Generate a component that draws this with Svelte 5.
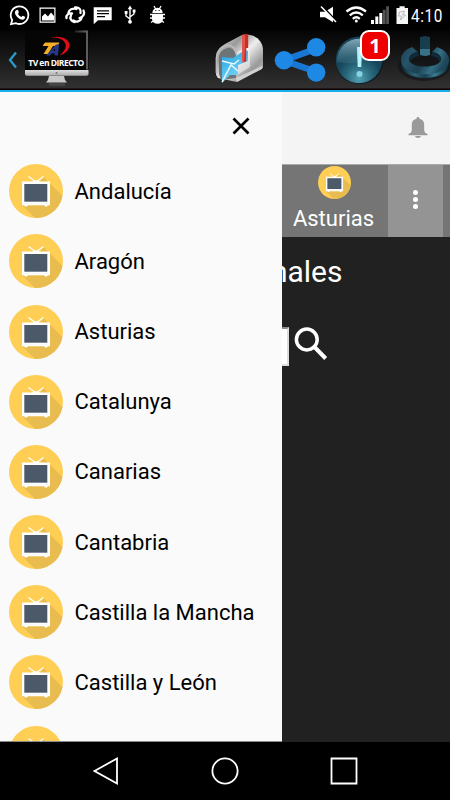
<script>
  const regions = ['Andalucía', 'Aragón', 'Asturias', 'Catalunya', 'Canarias', 'Cantabria', 'Castilla la Mancha', 'Castilla y León', ''];
</script>

{#snippet tv(size)}
  <svg class="tv" width={size} height={size} viewBox="0 0 54 54">
    <defs><clipPath id="disc"><circle cx="27" cy="27" r="27" /></clipPath></defs>
    <circle cx="27" cy="27" r="27" fill="#ffce54" />
    <path clip-path="url(#disc)" d="M34.500 13 L60 38.500 V60 H32 L13 41 L30 20Z" fill="#e9bc50" />
    <path d="M19.500 12.500 L26 17.200 M34.500 12.500 L28 17.200" fill="none" stroke="#fff" stroke-width="1.200" />
    <path d="M22.500 17.800q4.500-3 9 0Z M13 17.500h28v23.700H13z M15 41h4l-1 1.500h-2z M35 41h4l-1 1.500h-2z" fill="#fff" />
    <path d="M15.300 20h23v17.700h-23z" fill="#4c5968" />
    <path d="M14 39.300h25" stroke="#e6e9ed" stroke-width=".4" />
  </svg>
{/snippet}

<div class="screen">
  <div class="status">
    <svg width="170" height="30" viewBox="0 0 170 30" fill="#fff">
      <path d="M11 24.200l1.200-4.200A8.800 8.800 0 1 1 16 23.200Z" fill="none" stroke="#fff" stroke-width="1.800" />
      <path d="M16.300 10.200c1-1 1.700-.6 2.200 1l.3 1c.1.700-.8 1.200-.8 1.500.6 1.500 1.800 2.500 3.300 3.200.5.200 1-1.200 1.500-1.200l2.200 1.100c.5.400-.2 2.700-2.300 2.900-3.500.2-8.300-4.500-7.700-7.700 0-.8.700-1.400 1.300-1.800Z" />
      <path fill-rule="evenodd" d="M39.500 7.500h16v15.200h-16zM40.700 8.700v12.800h13.600V8.700z" />
      <path d="M42 20.500v-4l3-3 3 3 3-4 3 3.500v4.500Z" />
      <g fill="none" stroke="#fff" stroke-width="2.300" stroke-linecap="round">
        <path d="M68.500 12.500c.5-3 4-4.500 8-3.500M75 7.500c4-.5 6.500 2 5.500 5.500M83.500 10.500c1.500 3 0 6.500-4 7.500M81.500 18.500c-1.500 3-5 4-8 2M74.500 22c-3.500-.5-5-4-3.500-6.500M66.500 18c-.5-3 2-5 5.500-4.500" />
      </g>
      <path d="M93.700 7.200h18v13H98l-4.300 4z" />
      <path d="M97 10.800h12M97 13.700h12M97 16.600h8" stroke="#000" stroke-width="1.200" />
      <path d="M130 8v13M130 19l-4-3v-3M130 17l4-3v-3" fill="none" stroke="#fff" stroke-width="1.400" />
      <path d="M130 5.500l2.300 3.700h-4.600zM124.700 11h2.800v3h-2.800zM132.700 9.500h2.800v3h-2.800z" />
      <circle cx="130" cy="21.800" r="1.900" />
      <path d="M152.300 13a5.200 5.300 0 0 1 10.400 0zM152 14.200h11v4.800a5.500 4.800 0 0 1-11 0z" />
      <path d="M154 6l1.700 3M161 6l-1.700 3M150 14.500h15M150 18h15M151 22.500l3-2M164 22.500l-3-2" stroke="#fff" stroke-width="1.300" />
      <path d="M155.300 10.500h1M158.700 10.500h1" stroke="#000" />
    </svg>
    <svg width="92" height="30" viewBox="319 0 92 30" fill="#fff">
      <path d="M320 11.800h5l8-5v15.500l-8-5h-5z" /><path d="M322.500 6.500l15 16" stroke="#000" stroke-width="2" /><path d="M321 6.500l15 15.500" stroke="#fff" stroke-width="1.500" />
      <g fill="none" stroke="#fff" stroke-width="2.300"><path d="M346.500 11.500q9.800-8 19.500 0M349.800 15.300q6.500-5.500 13 0M352.800 18.800q3.500-3 7 0" /></g><circle cx="356.300" cy="21" r="1.500" />
      <path d="M371 20h3v4h-3zM375.300 16.500h3V24h-3zM379.300 13h3v11h-3z" /><path d="M382.800 9.700h2.800V24h-2.800zM386.200 6.300h2.700V24h-2.700z" fill="#555" />
      <path d="M396.500 8h3V6.300h5.200V8h3.300v16h-11.500z" fill="#f5f5f5" /><path d="M399.500 12l5-.8-2 3.800h3l-5 5 1-4h-3z" fill="none" stroke="#aaa" stroke-width=".8" />
    </svg>
    <span class="clock">4:10</span>
  </div>

  <div class="actionbar">
    <svg class="brand" width="95" height="59" viewBox="0 30 95 59">
      <defs>
        <linearGradient id="stand" y2="1" x2="0"><stop stop-color="#ddd" /><stop offset="1" stop-color="#aaa" /></linearGradient>
        <linearGradient id="edge" x1="0" x2="1"><stop stop-color="#222" /><stop offset="1" stop-color="#666" /></linearGradient>
      </defs>
      <path d="M16 52.500L10 60l6 7.500" fill="none" stroke="#2b9bc9" stroke-width="2.300" />
      <path d="M26 31h61q1.500 0 1.500 1.500V71H25V32z" fill="#050505" />
      <path d="M75 31.500h12v38" fill="none" stroke="url(#edge)" stroke-width="1.800" />
      <path d="M25 70h63.500v4q0 1.800-2 1.800H27q-2 0-2-1.800z" fill="url(#stand)" />
      <path d="M49 76h15l1 4 2 2.500H46l2-2.500z" fill="#c7c7c7" />
      <path d="M49 83h16v3H49z" fill="#555" opacity=".6" />
      <circle cx="56.500" cy="73" r="1" fill="#777" />
      <path d="M45 42.500h14.500l-2 3.500h-4.500l-5 8h-4.500l5-8h-6z" fill="#f5ae25" />
      <path d="M59 44.500l-1 11h-3.500l.2-2h-3l-1.700 2h-4l10-11zM55 48.500l-2 2.500h1.900z" fill="#263788" />
      <path d="M50 37.500c12-2.500 20 2 19.500 8.500-1 5-5 8-9.800 9.500 4.500-4 7.200-8 5.600-12.200-2-4.300-7.800-6.300-15.300-5.800Z" fill="#e40b18" />
      <text x="56" y="66" text-anchor="middle">TV en DIRECTO</text>
    </svg>
    <svg class="actions" width="237" height="59" viewBox="213 30 237 59">
      <defs>
        <linearGradient id="steel" x1="0" y1="0" x2="1" y2="1"><stop stop-color="#eee" /><stop offset=".3" stop-color="#999" /><stop offset=".5" stop-color="#eee" /><stop offset=".75" stop-color="#999" /><stop offset="1" stop-color="#ccc" /></linearGradient>
        <linearGradient id="letter" x1="0" y1="0" x2=".5" y2="1"><stop stop-color="#239bdc" /><stop offset=".5" stop-color="#4cbcea" /><stop offset="1" stop-color="#8bdaf9" /></linearGradient>
        <radialGradient id="orb" cy=".9"><stop stop-color="#53a1b4" /><stop offset=".6" stop-color="#286579" /><stop offset="1" stop-color="#17465a" /></radialGradient>
        <linearGradient id="gloss" x2="0" y2="1"><stop stop-color="#afd0dc" stop-opacity=".7" /><stop offset="1" stop-color="#66a3b5" stop-opacity=".15" /></linearGradient>
        <linearGradient id="ring" x2="1" y2=".3"><stop stop-color="#183f50" /><stop offset=".25" stop-color="#285468" /><stop offset=".55" stop-color="#1b4052" /><stop offset=".8" stop-color="#356f85" /><stop offset="1" stop-color="#1d4657" /></linearGradient>
        <linearGradient id="rim" x2="1"><stop stop-color="#0d2834" /><stop offset=".3" stop-color="#2d6378" /><stop offset=".5" stop-color="#173b4a" /><stop offset=".7" stop-color="#397b92" /><stop offset="1" stop-color="#0d2936" /></linearGradient>
      </defs>
      <path d="M216 75V57c0-6 4-10 9-13l17-9c11-2 20 4 21 14v19l-26 14-19-4z" fill="url(#steel)" />
      <path d="M219 74V57c1-9 15-14 17-1v22l-15 2z" fill="#6d7478" />
      <path d="M216.500 73V58c1-14 18-18 21-3v26" fill="none" stroke="#bbb" stroke-width="1.800" />
      <path d="M236 78l26-12v3l-25 13z" fill="#ddd" opacity=".8" />
      <path d="M237 52l13-7v22l-13 8z" fill="#f1f1f1" opacity=".6" />
      <path d="M222 57l11 1 12-8 3 1v10l-10 4v10l-8 0-8 8z" fill="url(#letter)" />
      <path d="M222 61l12 3 5-4M222 82l9-17 7 6" fill="none" stroke="#e9faff" stroke-width="1.500" />
      <path d="M242 35l4-1.200 2.200 1V48h-2v13.500l-4 1z" fill="#c62e27" /><path d="M242 35h3v12l-1 15h-2z" fill="#e55249" />
      <path d="M318.200 48l-34.500 12.500 34.500 12" fill="none" stroke="#1976d2" stroke-width="6.500" />
      <g fill="#1e88e5"><circle cx="316.200" cy="47.300" r="9.200" /><circle cx="284" cy="60.300" r="9.200" /><circle cx="316.200" cy="72.600" r="9.200" /></g>
      <circle cx="359.500" cy="60.200" r="24" fill="#0d1920" /><circle cx="359" cy="60" r="23.200" fill="url(#orb)" />
      <path d="M337 62A22.500 22.500 0 0 1 380 52q-19 15-43 10Z" fill="url(#gloss)" />
      <path d="M357 47h5l-.7 20h-3.600z" fill="#b5f3fb" /><circle cx="359.500" cy="74" r="3" fill="#86d3e3" />
      <ellipse cx="424" cy="66" rx="26" ry="15" fill="#0a0d0f" opacity=".5" />
      <path d="M401 60v3c0 20 48 20 48 0v-3c0 18-48 18-48 0z" fill="url(#rim)" />
      <path d="M412 47C404 50 401 55 401 60c0 19 48 19 48 0 0-5-4-10-12-13l-5 5c6 1 9 4 9 7 0 10-32 10-32 0 0-3 3-6 9-7z" fill="url(#ring)" />
      <path d="M418 52c-6 1-9 4-9 7l1 3c1-3 4-5 9-6zM432 52c6 1 9 4 9 7l-1 3c-1-3-4-5-9-6z" fill="#102b37" />
      <path d="M420 37l5-1 5 1v18l-5 1-5-1z" fill="#183e4e" /><path d="M420 49h10v6l-5 1-5-1z" fill="#397287" />
    </svg>
    <span class="badge">1</span>
  </div>

  <main>
    <div class="toolbar">
      <svg width="20" height="22" viewBox="0 0 20 22" fill="#9a9a9a"><path d="M10 0c1 0 1.500.7 1.500 1.700C15 2.500 16.200 5 16.200 8v5c0 2 1 3 3.300 4v1.300H.5V17c2.300-1 3.300-2 3.300-4V8c0-3 1.200-5.500 4.700-6.300C8.500.7 9 0 10 0zM7 19h6c-.3 2.500-5.700 2.500-6 0z" /></svg>
    </div>
    <div class="tabs">
      <div class="tab">{@render tv(33)}<span>Asturias</span></div>
      <div class="more"><i></i><i></i><i></i></div>
    </div>
    <h1>Canales</h1>
    <div class="search">
      <div class="field"></div>
      <svg width="34" height="34" viewBox="0 0 34 34" fill="none" stroke="#fff"><circle cx="12.800" cy="12.500" r="10.400" stroke-width="3.500" /><path d="M20 19.500l11.700 12" stroke-width="4" /></svg>
    </div>

    <aside>
      <div class="close"><svg width="18" height="18" viewBox="0 0 18 18" stroke="#000" stroke-width="2.700"><path d="M1.500 1.500l15 15M16.500 1.500l-15 15" /></svg></div>
      {#each regions as region}
        <div class="row">{@render tv(54)}<span>{region}</span></div>
      {/each}
    </aside>
  </main>

  <nav>
    <svg width="26" height="28" viewBox="0 0 26 28"><path d="M1.500 14L24 1.500v25z" /></svg>
    <svg width="28" height="28" viewBox="0 0 28 28"><circle cx="14" cy="14" r="12.600" /></svg>
    <svg width="28" height="28" viewBox="0 0 28 28"><path d="M1.500 1.500h25v25h-25z" /></svg>
  </nav>
</div>

<style>
  :global(body) { margin: 0; background: #000; }
  .screen { width: 450px; height: 800px; overflow: hidden; display: flex; flex-direction: column; font-family: Roboto, sans-serif; }
  svg { display: block; flex: none; }
  .status { height: 30px; background: #000; display: flex; color: #fff; flex: none; }
  .status svg + svg { margin-left: 149px; }
  .clock { font: 18px/31px Roboto, sans-serif; letter-spacing: .7px; white-space: nowrap; transform: scaleX(.85); transform-origin: left; }
  .actionbar { position: relative; box-sizing: border-box; height: 62px; flex: none; display: flex; justify-content: space-between; background: linear-gradient(#040404, #303030 57px, #303030 58px, #100000 59px, #100000 60px); border-bottom: 2px solid #16afe8; }
  .brand { overflow: visible; }
  .brand text { font: 700 8.500px "Open Sans", sans-serif; letter-spacing: -.5px; fill: #fff; }
  .badge { position: absolute; left: 360px; top: 0; box-sizing: border-box; width: 30px; height: 31px; border: 2px solid #fff; border-radius: 9px; background: #ee0000; color: #fff; font: 700 20px/27px "Open Sans", sans-serif; text-align: center; }
  main { position: relative; height: 650px; flex: none; background: #212121; overflow: hidden; }
  .toolbar { box-sizing: border-box; height: 73px; padding: 25px 22px 0 0; display: flex; justify-content: flex-end; background: #f4f4f4; border-bottom: 1px solid #aaa; }
  .tabs { height: 72px; background: #757575; display: flex; justify-content: flex-end; padding-right: 7px; }
  .tab { width: 106px; display: flex; flex-direction: column; align-items: center; color: #fff; font-size: 22px; line-height: 26px; padding-top: 1px; gap: 7px; }
  .tab svg { margin-left: -1px; }
  .tab span { margin-left: -3px; }
  .more { box-sizing: border-box; width: 55px; padding-bottom: 3px; background: #949494; display: flex; flex-direction: column; align-items: center; justify-content: center; gap: 2px; }
  .more i { width: 5px; height: 5px; border-radius: 50%; background: #fff; }
  h1 { margin: 17px 107.500px 0 0; height: 36px; text-align: right; color: #fff; font-size: 30px; line-height: 36px; font-weight: 400; white-space: nowrap; }
  .search { display: flex; margin-top: 37px; padding-left: 100px; gap: 5px; }
  .field { width: 189px; height: 39px; box-sizing: border-box; background: #fff; border: 2px inset #ddd; }
  aside { position: absolute; left: 0; top: 0; width: 282px; height: 650px; box-sizing: border-box; overflow: hidden; background: #fafafa; border-bottom: 1px solid #888; }
  .close { height: 64.200px; padding: 25px 32px 0 0; box-sizing: border-box; display: flex; justify-content: flex-end; }
  .row { height: 70.170px; display: flex; align-items: center; padding-left: 8.500px; gap: 12px; color: #000; }
  .row span { font-size: 22px; white-space: nowrap; }
  nav { height: 58px; background: #000; display: flex; align-items: center; padding-left: 93px; gap: 91.500px; }
  nav svg { fill: none; stroke: #fff; stroke-width: 1.800; }
</style>
